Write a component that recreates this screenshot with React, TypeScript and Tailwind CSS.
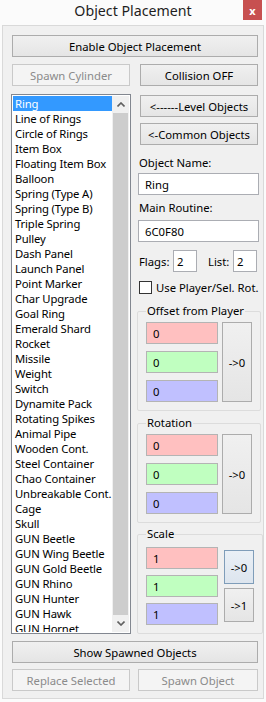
import React from "react";

const objects = [
  "Ring",
  "Line of Rings",
  "Circle of Rings",
  "Item Box",
  "Floating Item Box",
  "Balloon",
  "Spring (Type A)",
  "Spring (Type B)",
  "Triple Spring",
  "Pulley",
  "Dash Panel",
  "Launch Panel",
  "Point Marker",
  "Char Upgrade",
  "Goal Ring",
  "Emerald Shard",
  "Rocket",
  "Missile",
  "Weight",
  "Switch",
  "Dynamite Pack",
  "Rotating Spikes",
  "Animal Pipe",
  "Wooden Cont.",
  "Steel Container",
  "Chao Container",
  "Unbreakable Cont.",
  "Cage",
  "Skull",
  "GUN Beetle",
  "GUN Wing Beetle",
  "GUN Gold Beetle",
  "GUN Rhino",
  "GUN Hunter",
  "GUN Hawk",
  "GUN Hornet",
];

function Btn({ label, className = "", disabled = false }: { label: string; className?: string; disabled?: boolean }) {
  return (
    <div
      className={
        "flex items-center justify-center h-[22px] border whitespace-nowrap " +
        (disabled
          ? "border-[#c9c9c9] bg-[#f4f4f4] text-[#8b8b8b] "
          : "border-[#acacac] bg-linear-to-b from-[#f0f0f0] to-[#e5e5e5] text-black ") +
        className
      }
    >
      {label}
    </div>
  );
}

function ColorBox({ value, color }: { value: string; color: string }) {
  return (
    <div className={"w-[72px] h-[22px] border border-[#b4b4b4] flex items-center pl-[6px] " + color}>
      {value}
    </div>
  );
}

function Chevron({ down = false }: { down?: boolean }) {
  return (
    <svg width="8" height="5" viewBox="0 0 8 5" className={down ? "rotate-180" : ""}>
      <path d="M0.5 4.5 L4 1 L7.5 4.5" fill="none" stroke="#606060" strokeWidth="1.6" />
    </svg>
  );
}

export default function App() {
  return (
    <div className="w-[266px] h-[702px] overflow-hidden bg-[#fbfbfb] font-['Noto_Sans','Liberation_Sans',sans-serif] text-[11.3px] leading-[15px] text-black">
      {/* Title bar */}
      <div className="relative h-[25px] flex justify-center">
        <span className="text-[14.2px] leading-[21px] text-[#1e1e1e]">Object Placement</span>
        <div className="absolute top-0 right-[4px] w-[19px] h-[20px] bg-[#c75050] flex items-center justify-center text-white font-bold text-[11px]">
          x
        </div>
      </div>

      {/* Client area */}
      <div className="ml-[2px] w-[262px] border border-[#d9d9d9] bg-[#f0f0f0] pl-[9px] pt-[9px] pb-[7px]">
        <Btn label="Enable Object Placement" className="w-[246px]" />

        <div className="flex gap-[10px] mt-[7px]">
          <Btn label="Spawn Cylinder" className="w-[118px]" disabled />
          <Btn label="Collision OFF" className="w-[118px]" />
        </div>

        <div className="flex mt-[8px]">
          {/* Object list */}
          <div className="-ml-[1px] w-[120px] h-[540px] border border-[#828790] bg-white p-[1px] flex overflow-hidden">
            <div className="w-[99px] flex flex-col overflow-hidden">
              {objects.map((o, i) => (
                <div
                  key={o}
                  className={
                    "h-[15px] shrink-0 pl-[2px] tracking-[-0.15px] whitespace-nowrap " +
                    (i === 0 ? "bg-[#3399ff] text-white" : "")
                  }
                >
                  {o}
                </div>
              ))}
            </div>
            <div className="w-[17px] flex flex-col bg-[#f0f0f0]">
              <div className="h-[17px] flex items-center justify-center">
                <Chevron />
              </div>
              <div className="flex-1 mx-[1px] bg-[#cdcdcd]" />
              <div className="h-[17px] flex items-center justify-center">
                <Chevron down />
              </div>
            </div>
          </div>

          {/* Right column */}
          <div className="ml-[7px] w-[121px] flex flex-col">
            <Btn label="<------Level Objects" className="ml-[2px] w-[118px] mt-[1px]" />
            <Btn label="<-Common Objects" className="ml-[2px] w-[118px] mt-[6px]" />

            <div className="mt-[10px] h-[16px] leading-[16px] pl-[1px]">Object Name:</div>
            <div className="mt-[2px] h-[22px] border border-[#abadb3] bg-white flex items-center pl-[6px]">Ring</div>

            <div className="mt-[5px] h-[16px] leading-[16px] pl-[1px]">Main Routine:</div>
            <div className="mt-[4px] h-[22px] border border-[#abadb3] bg-white flex items-center pl-[6px]">6C0F80</div>

            <div className="mt-[8px] h-[22px] flex items-center">
              <span className="ml-[1px] w-[34px]">Flags:</span>
              <div className="w-[24px] h-[22px] border border-[#abadb3] bg-white flex items-center pl-[3px]">2</div>
              <span className="ml-[11px] w-[25px]">List:</span>
              <div className="w-[24px] h-[22px] border border-[#abadb3] bg-white flex items-center pl-[3px]">2</div>
            </div>

            <div className="mt-[7px] h-[16px] flex items-center">
              <div className="ml-[1px] w-[13px] h-[13px] border border-[#333333] bg-white" />
              <span className="ml-[4px] whitespace-nowrap">Use Player/Sel. Rot.</span>
            </div>

            {/* Offset from Player */}
            <fieldset className="mt-[8px] -ml-[1px] w-[121px] border border-[#dcdcdc] rounded-[2px] px-[8px] pt-[3px] pb-[8px]">
              <legend className="px-[1px] leading-[16px]">Offset from Player</legend>
              <div className="flex gap-[4px]">
                <div className="flex flex-col gap-[7px]">
                  <ColorBox value="0" color="bg-[#ffc0c0]" />
                  <ColorBox value="0" color="bg-[#c0ffc0]" />
                  <ColorBox value="0" color="bg-[#c0c0ff]" />
                </div>
                <Btn label="->0" className="w-[30px] h-[80px]" />
              </div>
            </fieldset>

            {/* Rotation */}
            <fieldset className="mt-[4px] -ml-[1px] w-[121px] border border-[#dcdcdc] rounded-[2px] px-[8px] pt-[3px] pb-[8px]">
              <legend className="px-[1px] leading-[16px]">Rotation</legend>
              <div className="flex gap-[4px]">
                <div className="flex flex-col gap-[7px]">
                  <ColorBox value="0" color="bg-[#ffc0c0]" />
                  <ColorBox value="0" color="bg-[#c0ffc0]" />
                  <ColorBox value="0" color="bg-[#c0c0ff]" />
                </div>
                <Btn label="->0" className="w-[30px] h-[80px]" />
              </div>
            </fieldset>

            {/* Scale */}
            <fieldset className="mt-[3px] -ml-[1px] w-[121px] border border-[#dcdcdc] rounded-[2px] px-[8px] pt-[5px] pb-[8px]">
              <legend className="px-[1px] leading-[16px]">Scale</legend>
              <div className="flex gap-[6px]">
                <div className="flex flex-col gap-[6px]">
                  <ColorBox value="1" color="bg-[#ffc0c0]" />
                  <ColorBox value="1" color="bg-[#c0ffc0]" />
                  <ColorBox value="1" color="bg-[#c0c0ff]" />
                </div>
                <div className="flex flex-col gap-[4px] pt-[3px]">
                  <div className="w-[30px] h-[34px] border border-[#7f9db9] bg-linear-to-b from-[#eaf0f6] to-[#dde5ee] flex items-center justify-center">
                    -&gt;0
                  </div>
                  <Btn label="->1" className="w-[30px] h-[34px]" />
                </div>
              </div>
            </fieldset>
          </div>
        </div>

        <Btn label="Show Spawned Objects" className="mt-[7px] w-[246px]" />
        <div className="flex gap-[8px] mt-[6px]">
          <Btn label="Replace Selected" className="w-[118px]" disabled />
          <Btn label="Spawn Object" className="w-[120px]" disabled />
        </div>
      </div>
    </div>
  );
}
